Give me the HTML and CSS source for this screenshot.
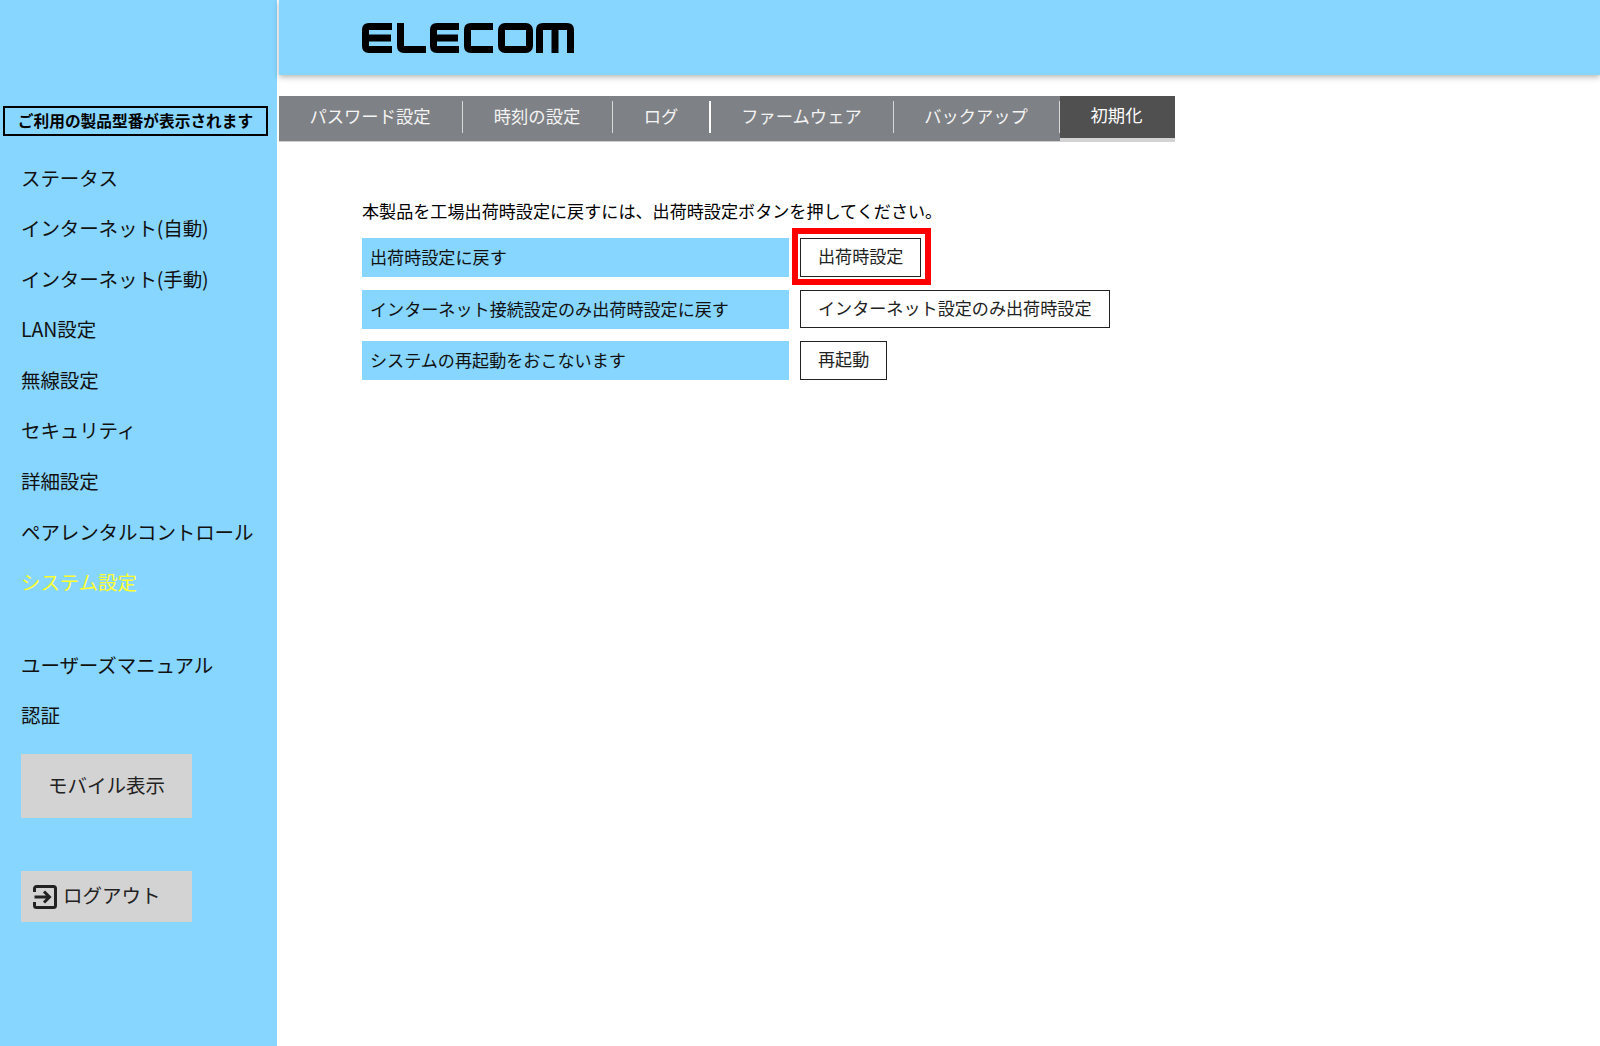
FILE: index.html
```html
<!DOCTYPE html>
<html lang="ja">
<head>
<meta charset="utf-8">
<title>ELECOM</title>
<link rel="stylesheet" href="styles.css">
</head>
<body>
<div class="page">
  <aside class="sidebar">
    <div class="model">ご利用の製品型番が表示されます</div>
    <nav class="menu">
      <a class="menu-item">ステータス</a>
      <a class="menu-item">インターネット(自動)</a>
      <a class="menu-item">インターネット(手動)</a>
      <a class="menu-item">LAN設定</a>
      <a class="menu-item">無線設定</a>
      <a class="menu-item">セキュリティ</a>
      <a class="menu-item">詳細設定</a>
      <a class="menu-item">ペアレンタルコントロール</a>
      <a class="menu-item active">システム設定</a>
    </nav>
    <nav class="menu menu-sub">
      <a class="menu-item">ユーザーズマニュアル</a>
      <a class="menu-item">認証</a>
    </nav>
    <a class="side-btn mobile">モバイル表示</a>
    <a class="side-btn logout">
      <svg class="logout-icon" width="24" height="24" viewBox="0 0 24 24" aria-hidden="true">
        <path d="M1.5 7V3.5a2 2 0 0 1 2-2h17a2 2 0 0 1 2 2v17a2 2 0 0 1-2 2h-17a2 2 0 0 1-2-2V17" fill="none" stroke="#222" stroke-width="3"/>
        <path d="M1.5 12h15M11 6.5l5.5 5.5-5.5 5.5" fill="none" stroke="#222" stroke-width="3"/>
      </svg>
      <span class="logout-text">ログアウト</span>
    </a>
  </aside>
  <div class="main">
    <header class="header">
      <svg class="logo" width="212" height="30" viewBox="0 0 212 30" role="img" aria-label="ELECOM">
        <g fill="none" stroke="#000" stroke-width="7" stroke-linejoin="round">
          <path d="M30 3.5H7Q3.5 3.5 3.5 7V23Q3.5 26.5 7 26.5H30M3.5 15H29"/>
          <path d="M38.5 0V23Q38.5 26.5 42 26.5H64"/>
          <path d="M97 3.5H75Q71.5 3.5 71.5 7V23Q71.5 26.5 75 26.5H97M71.5 15H96"/>
          <path d="M131 3.5H109Q105.5 3.5 105.5 7V23Q105.5 26.5 109 26.5H131"/>
          <rect x="139.5" y="3.5" width="28" height="23" rx="3.5"/>
          <path d="M177.5 30V7Q177.5 3.5 181 3.5H205Q208.5 3.5 208.5 7V30M193 3.5V30"/>
        </g>
      </svg>
    </header>
    <nav class="tabs">
      <a class="tab">パスワード設定</a>
      <a class="tab">時刻の設定</a>
      <a class="tab strong">ログ</a>
      <a class="tab">ファームウェア</a>
      <a class="tab">バックアップ</a>
      <a class="tab current">初期化</a>
    </nav>
    <main class="content">
      <p class="intro">本製品を工場出荷時設定に戻すには、出荷時設定ボタンを押してください。</p>
      <div class="row">
        <div class="label">出荷時設定に戻す</div>
        <button class="btn highlighted">出荷時設定</button>
      </div>
      <div class="row">
        <div class="label">インターネット接続設定のみ出荷時設定に戻す</div>
        <button class="btn">インターネット設定のみ出荷時設定</button>
      </div>
      <div class="row">
        <div class="label">システムの再起動をおこないます</div>
        <button class="btn">再起動</button>
      </div>
    </main>
  </div>
</div>
</body>
</html>
```
FILE: styles.css
```css
* { box-sizing: border-box; }
html, body { margin: 0; height: 100%; background: #fff; overflow: hidden; }
body {
  font-family: "Noto Sans CJK JP", "Noto Sans", sans-serif;
  color: #111;
}
.page { display: flex; height: 1046px; }

.sidebar {
  width: 277px;
  flex: none;
  background: #87d6ff;
  padding: 106px 0 0 0;
}
.model {
  width: 265px;
  height: 30px;
  margin-left: 3px;
  border: 2px solid #000;
  font-size: 15.7px;
  font-weight: 700;
  line-height: 26px;
  text-align: center;
  color: #000;
  white-space: nowrap;
}
.menu { display: flex; flex-direction: column; padding: 16.5px 0 0 21px; }
.menu-item {
  height: 50.6px;
  font-size: 19.5px;
  line-height: 50.6px;
  color: #111;
  letter-spacing: -0.1px;
  white-space: nowrap;
}
.menu-item.active { color: #ffff33; }
.menu-sub { padding-top: 32px; }
.side-btn {
  display: flex;
  align-items: center;
  width: 171px;
  margin-left: 21px;
  background: #d3d3d3;
  font-size: 19.5px;
  color: #222;
}
.mobile { height: 64px; margin-top: 13px; padding-bottom: 3px; justify-content: center; }
.logout { height: 51px; margin-top: 53px; padding-left: 12px; gap: 6px; }
.logout-icon { flex: none; }
.logout-text { padding-bottom: 5px; }

.main { flex: 1; min-width: 0; padding-left: 2px; }
.header {
  height: 75px;
  background: #87d6ff;
  box-shadow: 0 2px 6px rgba(0, 0, 0, .3);
  padding: 23px 0 0 83px;
}
.logo { display: block; }

.tabs {
  display: grid;
  grid-template-columns: 184px 150px 98px 183px 166px 115px;
  width: 896px;
  height: 46px;
  margin-top: 21px;
  background: #7e8185;
  border-bottom: 1px solid #d0d0d0;
}
.tab {
  position: relative;
  display: flex;
  align-items: center;
  justify-content: center;
  height: 45px;
  padding: 0 2px 7px 0;
  font-size: 17.3px;
  color: #f4f4f4;
  white-space: nowrap;
}
.tab:not(.current)::after {
  content: "";
  position: absolute;
  right: 0;
  top: 5px;
  bottom: 8px;
  width: 1px;
  background: #d8d8d8;
}
.tab.strong::after { width: 2px; background: #fff; }
.tab.current {
  height: 46px;
  padding-bottom: 5px;
  background: #505050;
  border-bottom: 4px solid #d3d3d3;
  color: #fff;
}

.content { padding: 56px 0 0 83px; }
.intro { margin: 0 0 15px; font-size: 17.1px; line-height: 25px; color: #000; }
.row { display: flex; align-items: center; margin-bottom: 12.5px; }
.label {
  width: 427px;
  height: 39px;
  padding-left: 8px;
  background: #87d6ff;
  font-size: 17.1px;
  line-height: 37px;
  color: #111;
}
.btn {
  height: 38.5px;
  margin-left: 11px;
  padding: 0 17px 4px;
  background: #fff;
  border: 1px solid #222;
  border-radius: 0;
  font: inherit;
  font-size: 17.1px;
  color: #222;
  white-space: nowrap;
}
.btn.highlighted { position: relative; }
.btn.highlighted::after {
  content: "";
  position: absolute;
  inset: -11px -11px -9px -9px;
  border: 6px solid #f00;
  pointer-events: none;
}
```
